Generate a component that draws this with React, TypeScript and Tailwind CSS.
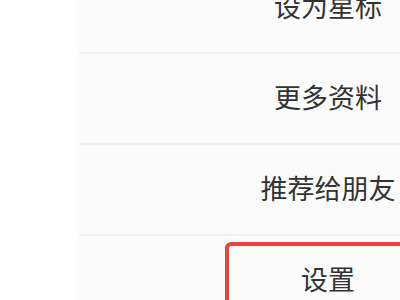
import * as React from 'react';

const items = ['设为星标', '更多资料', '推荐给朋友', '设置'];

export default function App() {
  return (
    <div
      className="w-[400px] h-[300px] overflow-hidden bg-white flex"
      style={{ fontFamily: '"Noto Sans CJK SC", "Noto Sans", sans-serif' }}
    >
      <div className="w-[79px] shrink-0 bg-white" />
      <div className="w-[498px] shrink-0 bg-[#fbfbfb] flex flex-col mt-[-37px]">
        {items.map((label, i) => (
          <div
            key={label}
            className="relative h-[91px] shrink-0 flex items-center justify-center border-b-2 border-[#f0f0f0]"
          >
            <span className="text-[27px] leading-none text-[#333333] mt-[-4px]">{label}</span>
            {i === items.length - 1 && (
              <div className="absolute left-[146px] top-[6px] w-[206px] h-[120px] border-4 border-[#e8453c] rounded-md" />
            )}
          </div>
        ))}
      </div>
    </div>
  );
}
